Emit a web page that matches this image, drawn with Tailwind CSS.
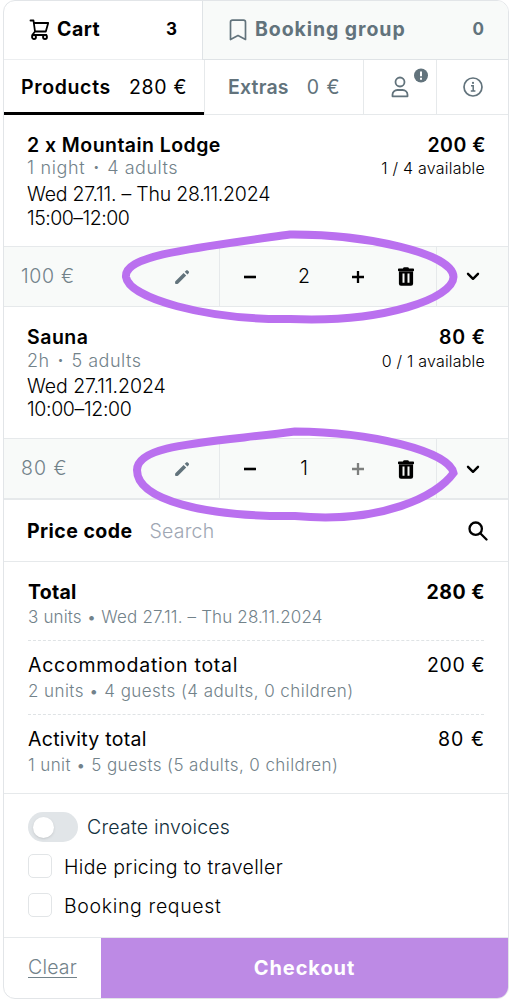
<!DOCTYPE html>
<html lang="en">
<head>
<meta charset="utf-8">
<title>Cart</title>
<script src="https://cdn.jsdelivr.net/npm/@tailwindcss/browser@4"></script>
</head>
<body class="bg-white font-[Inter,sans-serif] text-[19.5px] text-black whitespace-nowrap overflow-hidden">
<svg class="hidden">
  <symbol id="pencil" viewBox="0 0 24 24"><path d="M3.5 17.2 14.1 6.6l3.5 3.5L7 20.7a2 2 0 0 1-1.2.5H4.2c-.8 0-1.4-.5-1.4-1.3v-1.400c0-.5.3-1 .7-1.300zM15.600 5.100 17.200 3.500c.8-.8 2-.8 2.800 0l.8.8c.8.8.8 2 0 2.800l-1.600 1.600z"/></symbol>
  <symbol id="trash" viewBox="0 0 16 19"><path fill-rule="evenodd" d="M5 1.500A1.500 1.500 0 0 1 6.500.200h3A1.500 1.500 0 0 1 11 1.500h4.200a.8.8 0 0 1 .8.8v1.200a.8.8 0 0 1-.8.8H.8a.8.8 0 0 1-.8-.8V2.300a.8.8 0 0 1 .8-.8zM.900 4h14.200v12.700a2.100 2.100 0 0 1-2.100 2.100H3a2.100 2.100 0 0 1-2.100-2.100zM4.500 6.500v9.300h2V6.500zm5 0v9.300h2V6.500z"/></symbol>
  <symbol id="chevron" viewBox="0 0 14 9"><path d="M2 1.800l5 5 5-5" fill="none" stroke="currentColor" stroke-width="2.400" stroke-linecap="round" stroke-linejoin="round"/></symbol>
  <symbol id="minus" viewBox="0 0 14 14"><path d="M1 7h12" stroke="currentColor" stroke-width="2.600"/></symbol>
  <symbol id="plus" viewBox="0 0 14 14"><path d="M1 7h12M7 1v12" stroke="currentColor" stroke-width="2.300"/></symbol>
</svg>

<main class="relative ml-[3px] w-[506px] h-[999px] border border-[#e2e5e8] rounded-[12px] overflow-hidden flex flex-col">
  <header class="flex h-[59px] shrink-0 font-bold">
    <div class="w-[198px] flex items-center pl-[25px] pr-[25px] pb-px border-b border-[#eceef0]">
      <svg class="w-[21px] h-[22px] mr-[7px] mt-px" viewBox="0 0 21 22" fill="none" stroke="#000" stroke-width="1.800" stroke-linejoin="round" stroke-linecap="round"><path d="M1.500 1.500h3L6 12.500M4.900 4h14.300L16.800 12.500H6L3.300 16h14"/><circle cx="5" cy="18" r="2"/><circle cx="16" cy="18" r="2"/></svg>
      <span class="tracking-[0.450px]">Cart</span>
      <span class="ml-auto text-[17px]">3</span>
    </div>
    <div class="flex-1 flex items-center pl-[26px] pr-[24px] pb-px bg-[#f8faf9] border-l border-b border-[#dfe3e6] text-[#62737c]">
      <svg class="w-[18px] h-[22px] mr-[8px]" viewBox="0 0 18 22" fill="none" stroke="#62737c" stroke-width="1.700" stroke-linejoin="round"><path d="M1.500 3.200C1.500 2 2.300 1.200 3.500 1.200h11c1.200 0 2 .8 2 2V20.500L9 16.500 1.500 20.500z"/></svg>
      <span class="tracking-[0.920px]">Booking group</span>
      <span class="ml-auto text-[17px]">0</span>
    </div>
  </header>

  <nav class="flex h-[55px] shrink-0 border-b border-[#e6e9eb]">
    <div class="w-[200px] -mb-px pl-[17px] pt-[3px] flex items-center border-b-[3px] border-black">
      <span class="font-semibold tracking-[0.650px]">Products</span><span class="ml-[18px] tracking-[0.700px]">280 €</span>
    </div>
    <div class="w-[159px] pl-[23px] pt-px flex items-center border-l border-[#e6e9eb] text-[#62737c]">
      <span class="font-semibold tracking-[0.200px]">Extras</span><span class="ml-[18px] tracking-[1px]">0 €</span>
    </div>
    <div class="relative w-[73px] flex items-center justify-center border-l border-[#e6e9eb]">
      <svg class="w-[18px] h-[22px]" viewBox="0 0 18 22" fill="none" stroke="#62737c" stroke-width="1.800" stroke-linejoin="round"><circle cx="9" cy="6" r="4.500"/><path d="M1.500 20.300v-1.500c0-2.700 2.200-4.800 4.900-4.800h5.200c2.700 0 4.900 2.100 4.900 4.800v1.500z"/></svg>
      <svg class="absolute left-[50px] top-[8px] w-[14px] h-[15px]" viewBox="0 0 14 15"><circle cx="7" cy="7.500" r="7" fill="#62737c"/><path d="M7 3.500v4.700M7 9.700v2" stroke="#fff" stroke-width="2"/></svg>
    </div>
    <div class="flex-1 flex items-center justify-center border-l border-[#e6e9eb]">
      <svg class="w-[20px] h-[20px]" viewBox="0 0 20 20" fill="none" stroke="#62737c"><circle cx="10" cy="10" r="9" stroke-width="1.700"/><path d="M8 8.700h2.200v5M7.800 14h4.600" stroke-width="1.500"/><circle cx="10" cy="5.900" r="1.100" fill="#62737c" stroke="none"/></svg>
    </div>
  </nav>

  <section class="h-[131px] shrink-0 pt-[18px] pl-[23px] pr-[22px] leading-[24px]">
    <div class="flex justify-between font-semibold"><span class="tracking-[0.450px]">2 x Mountain Lodge</span><span class="tracking-[0.520px]">200 €</span></div>
    <div class="-mt-px flex justify-between"><span class="text-[18px] text-[#72828a] font-[350] flex gap-[8px]"><span class="tracking-[0.650px]">1 night</span><span class="font-bold">·</span><span class="tracking-[0.500px]">4 adults</span></span><span class="mr-px text-[16px] font-[350] tracking-[0.220px]">1 / 4 available</span></div>
    <div class="mt-[2px] font-[350] tracking-[-0.220px]">Wed 27.11. – Thu 28.11.2024</div>
    <div class="font-[350] tracking-[-0.500px]">15:00–12:00</div>
  </section>
  <div class="h-[61px] shrink-0 flex bg-[#f8faf9] border-y border-[#e6e9eb]">
    <div class="w-[215px] flex items-center justify-between pl-[17px] pr-[28px] text-[#72828a] font-[350]"><span class="tracking-[0.700px]">100 €</span><svg class="w-[18px] h-[18px] fill-[#62737c]"><use href="#pencil"/></svg></div>
    <div class="w-[218px] flex items-center border-x border-[#e6e9eb] pl-[23px]">
      <svg class="w-[14px] h-[14px]"><use href="#minus"/></svg>
      <span class="w-[94px] text-center font-[350]">2</span>
      <svg class="w-[14px] h-[14px]"><use href="#plus"/></svg>
      <svg class="w-[16px] h-[19px] ml-[33px]"><use href="#trash"/></svg>
    </div>
    <div class="flex-1 flex items-center justify-center"><svg class="w-[14px] h-[9px]"><use href="#chevron"/></svg></div>
  </div>

  <section class="h-[131px] shrink-0 pt-[18px] pl-[23px] pr-[22px] leading-[24px]">
    <div class="flex justify-between font-semibold"><span class="tracking-[0.500px]">Sauna</span><span class="tracking-[0.900px]">80 €</span></div>
    <div class="flex justify-between"><span class="text-[18px] text-[#72828a] font-[350] flex gap-[8px]"><span class="tracking-[0.400px]">2h</span><span class="font-bold">·</span><span class="tracking-[0.500px]">5 adults</span></span><span class="mr-px text-[16px] font-[350] tracking-[0.200px]">0 / 1 available</span></div>
    <div class="mt-px font-[350] tracking-[-0.050px]">Wed 27.11.2024</div>
    <div class="-mt-px font-[350] tracking-[-0.350px]">10:00–12:00</div>
  </section>
  <div class="h-[62px] shrink-0 flex bg-[#f8faf9] border-t border-b-2 border-[#e6e9eb]">
    <div class="w-[215px] flex items-center justify-between pt-px pl-[17px] pr-[28px] text-[#72828a] font-[350]"><span class="tracking-[1px]">80 €</span><svg class="w-[18px] h-[18px] fill-[#62737c]"><use href="#pencil"/></svg></div>
    <div class="w-[218px] flex items-center border-x border-[#e6e9eb] pt-px pl-[23px]">
      <svg class="w-[14px] h-[14px]"><use href="#minus"/></svg>
      <span class="w-[94px] text-center font-[350]">1</span>
      <svg class="w-[14px] h-[14px] text-[#7d7f7e]"><use href="#plus"/></svg>
      <svg class="w-[16px] h-[19px] ml-[33px]"><use href="#trash"/></svg>
    </div>
    <div class="flex-1 flex items-center justify-center pt-px"><svg class="w-[14px] h-[9px]"><use href="#chevron"/></svg></div>
  </div>

  <div class="h-[62px] shrink-0 flex items-center pt-[2px] pl-[23px] pr-[20px] border-b border-[#e6e9eb]">
    <span class="font-bold tracking-[0.450px]">Price code</span>
    <span class="ml-[17px] font-[350] tracking-[0.200px] text-[#a0a7b4]">Search</span>
    <svg class="ml-auto mb-[2px] w-[20px] h-[20px]" viewBox="0 0 20 20" fill="none" stroke="#000" stroke-width="2.300" stroke-linecap="round"><circle cx="7.700" cy="7.700" r="6.200"/><path d="M12.500 12.500l6 6"/></svg>
  </div>

  <section class="h-[232px] shrink-0 px-[24px] border-b border-[#e6e9eb]">
    <div class="h-[79px] pt-[18px] border-b border-dashed border-[#dfe3e5]">
      <div class="-mr-px flex justify-between font-bold leading-[24px]"><span class="tracking-[0.250px]">Total</span><span class="tracking-[0.500px]">280 €</span></div>
      <div class="-mt-px text-[17px] leading-[28px] font-[350] tracking-[0.150px] text-[#72828a]">3 units • Wed 27.11. – Thu 28.11.2024</div>
    </div>
    <div class="h-[74px] pt-[12px] border-b border-dashed border-[#dfe3e5]">
      <div class="-mr-px flex justify-between leading-[24px]"><span class="tracking-[0.750px]">Accommodation total</span><span class="tracking-[0.600px]">200 €</span></div>
      <div class="text-[17px] leading-[28px] font-[350] tracking-[0.430px] text-[#72828a]">2 units • 4 guests (4 adults, 0 children)</div>
    </div>
    <div class="pt-[12px]">
      <div class="-mr-px flex justify-between leading-[24px]"><span class="tracking-[0.300px]">Activity total</span><span class="tracking-[1.050px]">80 €</span></div>
      <div class="text-[17px] leading-[28px] font-[350] tracking-[0.400px] text-[#72828a]">1 unit • 5 guests (5 adults, 0 children)</div>
    </div>
  </section>

  <section class="h-[144px] shrink-0 pl-[24px] pt-[18px] border-b border-[#e6e9eb]">
    <div class="flex items-center h-[30px]"><span class="w-[50px] h-[30px] rounded-full bg-[#e1e5e8] p-[5px]"><span class="block w-[21px] h-[21px] rounded-full bg-white shadow-sm"></span></span><span class="ml-[9px] mt-px font-[350] tracking-[0.200px] text-[#132f3d]">Create invoices</span></div>
    <div class="flex items-center h-[24px] mt-[12px]"><span class="w-[24px] h-[24px] rounded-[5px] border border-[#e2e5e7]"></span><span class="ml-[12px] mt-[3px] font-[350] tracking-[0.350px]">Hide pricing to traveller</span></div>
    <div class="flex items-center h-[24px] mt-[15px]"><span class="w-[24px] h-[24px] rounded-[5px] border border-[#e2e5e7]"></span><span class="ml-[12px] mt-[3px] font-[350] tracking-[0.650px]">Booking request</span></div>
  </section>

  <footer class="flex flex-1">
    <div class="w-[97px] flex items-center pl-[24px] text-[#72828a] font-[350]"><span class="underline underline-offset-[3px] decoration-1 tracking-[0.200px]">Clear</span></div>
    <div class="flex-1 flex items-center justify-center bg-[#bd8ae5] text-white font-bold text-[20px] tracking-[0.900px]">Checkout</div>
  </footer>
</main>

<!-- Hand-drawn highlights around the quantity controls -->
<svg class="absolute left-0 top-0 w-[517px] h-[999px] pointer-events-none" viewBox="0 0 517 999" fill="none" stroke="#ba70ef" stroke-width="8" stroke-linejoin="miter">
  <path d="M126 277C124 256 185 249 290 234.500C365 234 453 253 453.500 277C453 298 385 323 290 319C205 320 129 298 126 277Z"/>
  <path d="M137 470C137 444 205 443 295 431.500C370 432 449 451 453.500 473C437 496 382 524 295 516C205 517 137 500 137 470Z"/>
</svg>
</body>
</html>
